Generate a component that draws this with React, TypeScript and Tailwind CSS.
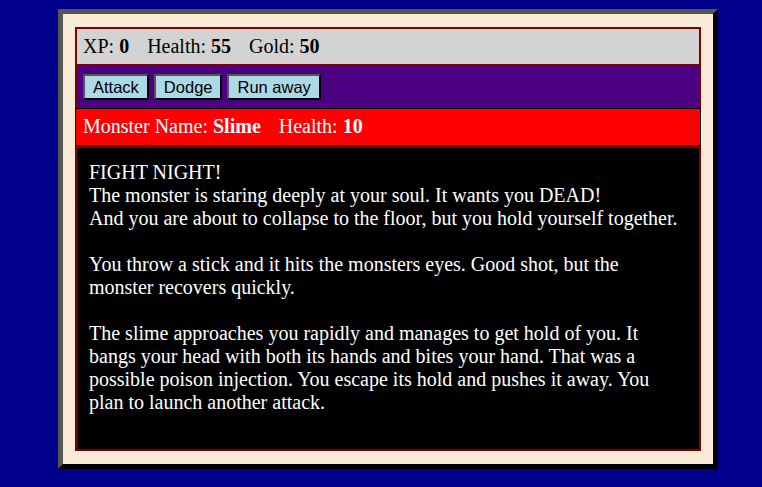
import React from "react";

export default function App() {
  const serif = { fontFamily: '"Liberation Serif", "Times New Roman", serif' };
  const sans = { fontFamily: '"Liberation Sans", Arial, sans-serif' };
  const btn =
    "bg-[#ADD8E6] text-black text-[16.5px] leading-[18px] px-[8px] py-[2px] border-2 border-t-[#555555] border-l-[#555555] border-r-black border-b-black";
  return (
    <div className="w-[762px] h-[487px] bg-[#00008B] overflow-hidden pt-[9px]" style={serif}>
      <div className="ml-[58px] w-[660px] h-[460px] bg-[#FAEBD7] border-[5px] border-t-[#555555] border-l-[#555555] border-r-black border-b-black px-[12px] pt-[13px] pb-[13px]">
        <div className="w-[626px] h-[424px] border-2 border-[#800000] bg-[#800000] flex flex-col">
          <div className="h-[35px] bg-[#D3D3D3] text-black text-[20px] leading-[23px] px-[6px] py-[6px] flex gap-[18px]">
            <span>
              XP: <strong>0</strong>
            </span>
            <span>
              Health: <strong>55</strong>
            </span>
            <span>
              Gold: <strong>50</strong>
            </span>
          </div>
          <div className="h-[41px] mt-[2px] bg-[#4B0082] px-[6px] pt-[8px] flex items-start gap-[5px]" style={sans}>
            <button className={btn} style={sans}>Attack</button>
            <button className={btn} style={sans}>Dodge</button>
            <button className={btn} style={sans}>Run away</button>
          </div>
          <div className="h-[38px] mt-[1px] -mx-[2px] bg-[#FF0000] border border-black text-white text-[20px] leading-[23px] pl-[7px] pt-[6px] flex gap-[18px]">
            <span>
              Monster Name: <strong>Slime</strong>
            </span>
            <span>
              Health: <strong>10</strong>
            </span>
          </div>
          <div className="h-[301px] mt-[2px] bg-black text-white text-[20px] leading-[23px] px-[12px] pt-[13px]">
            FIGHT NIGHT!
            <br />
            The monster is staring deeply at your soul. It wants you DEAD!
            <br />
            And you are about to collapse to the floor, but you hold yourself together.
            <br />
            <br />
            You throw a stick and it hits the monsters eyes. Good shot, but the monster recovers quickly.
            <br />
            <br />
            The slime approaches you rapidly and manages to get hold of you. It bangs your head with both its hands and bites your hand. That was a possible poison injection. You escape its hold and pushes it away. You plan to launch another attack.
          </div>
        </div>
      </div>
    </div>
  );
}
